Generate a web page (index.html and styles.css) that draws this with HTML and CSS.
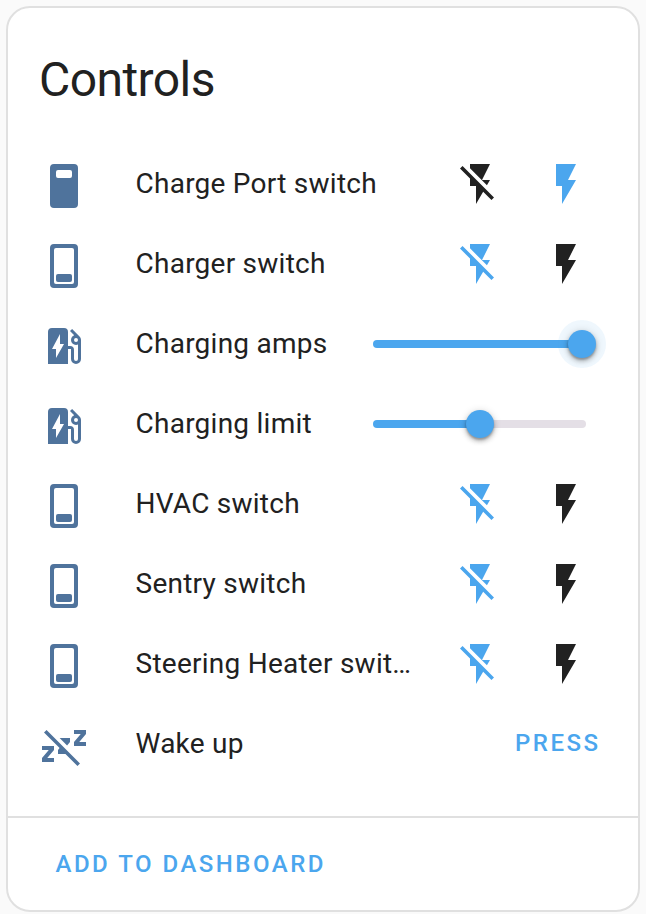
FILE: index.html
```html
<!DOCTYPE html>
<html lang="en">
<head>
<meta charset="utf-8">
<title>Controls</title>
<link rel="stylesheet" href="styles.css">
</head>
<body>
<svg class="defs" aria-hidden="true">
  <symbol id="switch-on" viewBox="0 0 24 24"><path fill-rule="evenodd" d="M7 1H17A2 2 0 0 1 19 3V21A2 2 0 0 1 17 23H7A2 2 0 0 1 5 21V3A2 2 0 0 1 7 1M9 4A1 1 0 0 0 8 5V7A1 1 0 0 0 9 8H15A1 1 0 0 0 16 7V5A1 1 0 0 0 15 4Z"/></symbol>
  <symbol id="switch-off" viewBox="0 0 24 24"><path fill-rule="evenodd" d="M7 1H17A2 2 0 0 1 19 3V21A2 2 0 0 1 17 23H7A2 2 0 0 1 5 21V3A2 2 0 0 1 7 1M8 3A1 1 0 0 0 7 4V20A1 1 0 0 0 8 21H16A1 1 0 0 0 17 20V4A1 1 0 0 0 16 3Z"/><rect x="8" y="16" width="8" height="4" rx="1"/></symbol>
  <symbol id="ev-station" viewBox="0 0 24 24"><path d="M19.77,7.23L19.78,7.22L16.06,3.5L15,4.56L17.11,6.67C16.17,7.03 15.5,7.93 15.5,9A2.5,2.5 0 0,0 18,11.5C18.36,11.5 18.69,11.42 19,11.29V18.5A1,1 0 0,1 18,19.5A1,1 0 0,1 17,18.5V14A2,2 0 0,0 15,12H14V5A2,2 0 0,0 12,3H6A2,2 0 0,0 4,5V21H14V13.5H15.5V18.5A2.5,2.5 0 0,0 18,21A2.5,2.5 0 0,0 20.5,18.5V9C20.5,8.31 20.22,7.68 19.77,7.23M18,10A1,1 0 0,1 17,9A1,1 0 0,1 18,8A1,1 0 0,1 19,9A1,1 0 0,1 18,10M8,18V13.5H6L10,6V11H12L8,18Z"/></symbol>
  <symbol id="sleep-off" viewBox="0 0 24 24"><path d="M2,5.27L3.28,4L20,20.72L18.73,22L12.73,16H9V14L9.79,13.06L2,5.27M23,12H17V10L20.39,6H17V4H23V6L19.62,10H23V12M9.82,8H15V10L13.54,11.72L9.82,8M7,20H1V18L4.39,14H1V12H7V14L3.62,18H7V20Z"/></symbol>
  <symbol id="flash" viewBox="0 0 24 24"><path d="M7,2V13H10V22L17,10H13L17,2H7Z"/></symbol>
  <symbol id="flash-off" viewBox="0 0 24 24"><path d="M17,10H13L17,2H7V4.18L15.46,12.64M3.27,3L2,4.27L7,9.27V13H10V22L13.58,15.86L17.73,20L19,18.73L3.27,3Z"/></symbol>
</svg>
<main class="card">
  <h1 class="title">Controls</h1>
  <div class="rows">
    <div class="row">
      <svg class="icon"><use href="#switch-on"/></svg><span class="name">Charge Port switch</span>
      <div class="toggles"><svg class="flash"><use href="#flash-off"/></svg><svg class="flash active"><use href="#flash"/></svg></div>
    </div>
    <div class="row">
      <svg class="icon"><use href="#switch-off"/></svg><span class="name">Charger switch</span>
      <div class="toggles"><svg class="flash active"><use href="#flash-off"/></svg><svg class="flash"><use href="#flash"/></svg></div>
    </div>
    <div class="row">
      <svg class="icon"><use href="#ev-station"/></svg><span class="name">Charging amps</span>
      <div class="slider"><div class="fill full"></div><div class="knob focused"></div><div class="rest"></div></div>
    </div>
    <div class="row">
      <svg class="icon"><use href="#ev-station"/></svg><span class="name">Charging limit</span>
      <div class="slider"><div class="fill half"></div><div class="knob"></div><div class="rest"></div></div>
    </div>
    <div class="row">
      <svg class="icon"><use href="#switch-off"/></svg><span class="name">HVAC switch</span>
      <div class="toggles"><svg class="flash active"><use href="#flash-off"/></svg><svg class="flash"><use href="#flash"/></svg></div>
    </div>
    <div class="row">
      <svg class="icon"><use href="#switch-off"/></svg><span class="name">Sentry switch</span>
      <div class="toggles"><svg class="flash active"><use href="#flash-off"/></svg><svg class="flash"><use href="#flash"/></svg></div>
    </div>
    <div class="row">
      <svg class="icon"><use href="#switch-off"/></svg><span class="name">Steering Heater swit…</span>
      <div class="toggles"><svg class="flash active"><use href="#flash-off"/></svg><svg class="flash"><use href="#flash"/></svg></div>
    </div>
    <div class="row">
      <svg class="icon"><use href="#sleep-off"/></svg><span class="name">Wake up</span>
      <button class="button press">PRESS</button>
    </div>
  </div>
  <footer class="footer"><button class="button">ADD TO DASHBOARD</button></footer>
</main>
</body>
</html>
```
FILE: styles.css
```css
* { box-sizing: border-box; }
body {
  margin: 0;
  padding: 6px;
  background: #fafafa;
  color: #212121;
  font-family: Roboto, sans-serif;
}
.defs { position: absolute; width: 0; height: 0; }
.card {
  display: flex;
  flex-direction: column;
  width: 634px;
  height: 906px;
  background: #fff;
  border: 2px solid #e0e0e0;
  border-radius: 24px;
}
.title {
  margin: 0;
  padding: 24px 31px 16px;
  height: 136px;
  font-size: 48px;
  line-height: 96px;
  font-weight: 400;
  letter-spacing: -0.012em;
}
.rows { flex: 1; padding: 0 38px 0 32px; }
.row { display: flex; align-items: center; height: 80px; }
.icon {
  flex: none;
  width: 48px;
  height: 48px;
  margin: 4px 47.5px 0 0;
  fill: #4f739c;
}
.name {
  flex: 1;
  font-size: 28px;
  line-height: 40px;
  letter-spacing: 0.25px;
  white-space: nowrap;
}
.toggles { display: flex; gap: 38px; margin-right: 10px; }
.flash { display: block; width: 48px; height: 48px; fill: #212121; }
.flash.active { fill: #4ba6ee; }
.slider { display: flex; align-items: center; width: 213px; margin-right: 14px; }
.fill { height: 8px; border-radius: 4px 0 0 4px; background: #4ba6ee; }
.fill.full { width: 209px; }
.fill.half { width: 107px; }
.knob {
  z-index: 1;
  flex: none;
  width: 28px;
  height: 28px;
  margin: 0 -14px;
  border-radius: 50%;
  background: #4ba6ee;
  box-shadow: 0 2px 2px rgba(0,0,0,.2), 0 3px 5px rgba(0,0,0,.24), 0 1px 8px rgba(0,0,0,.14);
}
.knob.focused {
  box-shadow: 0 2px 2px rgba(0,0,0,.2), 0 3px 5px rgba(0,0,0,.24), 0 1px 8px rgba(0,0,0,.14), 0 0 0 10px rgba(75,166,238,.09);
}
.rest { flex: 1; height: 8px; border-radius: 0 4px 4px 0; background: #e4dfe6; }
.button {
  padding: 0;
  border: 0;
  background: none;
  color: #4ba6ee;
  font: 500 24px/36px Roboto, sans-serif;
  letter-spacing: 2.5px;
}
.press { margin: 0 -0.5px 2px 0; }
.footer {
  display: flex;
  align-items: center;
  height: 94px;
  padding: 0 47.5px;
  border-top: 2px solid #e0e0e0;
}
```
